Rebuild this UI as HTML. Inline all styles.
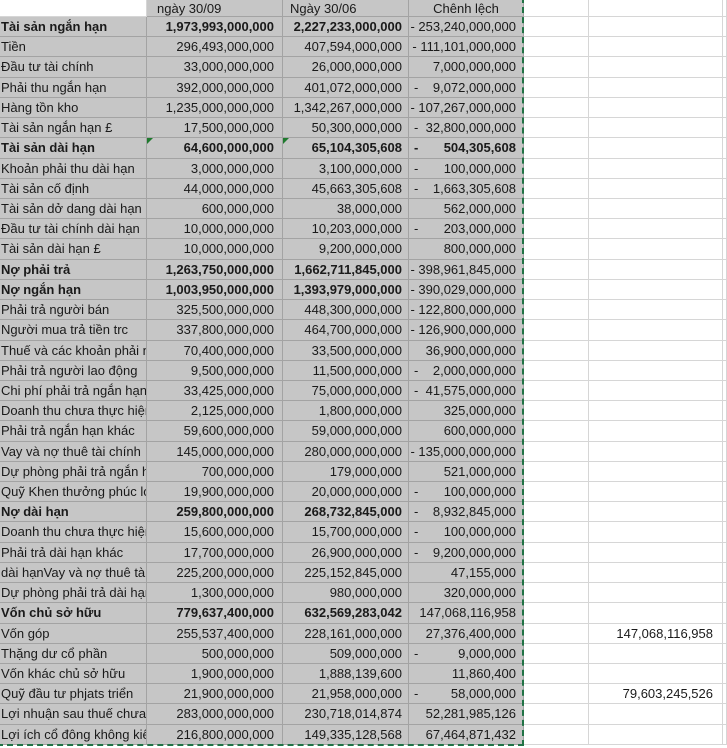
<!DOCTYPE html>
<html><head><meta charset="utf-8"><style>
*{margin:0;padding:0;box-sizing:border-box}
body{width:727px;height:748px;overflow:hidden;background:#fff;font-family:"Liberation Sans",Arial,sans-serif;font-size:13px;color:#1a1a1a;position:relative}
.r{display:flex;height:20.22px;line-height:20px}
.h{height:17px;line-height:17px}
.c{border-right:1px solid #a3a3a3;border-bottom:1px solid #a3a3a3;background:#c6c6c6;overflow:hidden;white-space:nowrap;position:relative}
.a{width:147px;padding-left:1px}
.b{width:136px;text-align:right;padding-right:8px}
.cc{width:126px;text-align:right;padding-right:6px}
.d{width:115px;text-align:right;padding-right:7px}
.d i{position:absolute;left:5px;font-style:normal}
.e{width:65px;background:#fff;border-color:#d6d6d6}
.f{width:134px;background:#fff;border-color:#d6d6d6;text-align:right;padding-right:9px}
.g{flex:1;background:#fff;border-right:1px solid #d6d6d6;border-bottom:1px solid #d6d6d6}
.bo .a,.bo .b,.bo .cc,.bo .d{font-weight:bold}
.w{background:#fff;border-color:#d6d6d6}
.tri{position:absolute;left:0;top:0;width:0;height:0;border-top:6px solid #1f7a2e;border-right:6px solid transparent}
#ants{position:absolute;left:-3px;top:-3px;width:527px;height:749px;border:2px dashed #217346;pointer-events:none}
</style></head><body>
<div class="r h"><div class="c a w"></div><div class="c b" style="text-align:left;padding-left:10px">ngày 30/09</div><div class="c cc" style="text-align:left;padding-left:7px">Ngày 30/06</div><div class="c d" style="text-align:center;padding:0">Chênh lệch</div><div class="c e"></div><div class="c f"></div><div class="g"></div></div>

<div class="r bo"><div class="c a">Tài sản ngắn hạn</div><div class="c b">1,973,993,000,000</div><div class="c cc">2,227,233,000,000</div><div class="c d" style="font-weight:normal">- 253,240,000,000</div><div class="c e"></div><div class="c f"></div><div class="g"></div></div>
<div class="r"><div class="c a">Tiền</div><div class="c b">296,493,000,000</div><div class="c cc">407,594,000,000</div><div class="c d">- 111,101,000,000</div><div class="c e"></div><div class="c f"></div><div class="g"></div></div>
<div class="r"><div class="c a">Đầu tư tài chính</div><div class="c b">33,000,000,000</div><div class="c cc">26,000,000,000</div><div class="c d">7,000,000,000</div><div class="c e"></div><div class="c f"></div><div class="g"></div></div>
<div class="r"><div class="c a">Phải thu ngắn hạn</div><div class="c b">392,000,000,000</div><div class="c cc">401,072,000,000</div><div class="c d"><i>-</i>9,072,000,000</div><div class="c e"></div><div class="c f"></div><div class="g"></div></div>
<div class="r"><div class="c a">Hàng tồn kho</div><div class="c b">1,235,000,000,000</div><div class="c cc">1,342,267,000,000</div><div class="c d">- 107,267,000,000</div><div class="c e"></div><div class="c f"></div><div class="g"></div></div>
<div class="r"><div class="c a">Tài sản ngắn hạn £</div><div class="c b">17,500,000,000</div><div class="c cc">50,300,000,000</div><div class="c d"><i>-</i>32,800,000,000</div><div class="c e"></div><div class="c f"></div><div class="g"></div></div>
<div class="r bo"><div class="c a">Tài sản dài hạn</div><div class="c b"><span class="tri"></span>64,600,000,000</div><div class="c cc"><span class="tri"></span>65,104,305,608</div><div class="c d"><i>-</i>504,305,608</div><div class="c e"></div><div class="c f"></div><div class="g"></div></div>
<div class="r"><div class="c a">Khoản phải thu dài hạn</div><div class="c b">3,000,000,000</div><div class="c cc">3,100,000,000</div><div class="c d"><i>-</i>100,000,000</div><div class="c e"></div><div class="c f"></div><div class="g"></div></div>
<div class="r"><div class="c a">Tài sản cố định</div><div class="c b">44,000,000,000</div><div class="c cc">45,663,305,608</div><div class="c d"><i>-</i>1,663,305,608</div><div class="c e"></div><div class="c f"></div><div class="g"></div></div>
<div class="r"><div class="c a">Tài sản dở dang dài hạn</div><div class="c b">600,000,000</div><div class="c cc">38,000,000</div><div class="c d">562,000,000</div><div class="c e"></div><div class="c f"></div><div class="g"></div></div>
<div class="r"><div class="c a">Đầu tư tài chính dài hạn</div><div class="c b">10,000,000,000</div><div class="c cc">10,203,000,000</div><div class="c d"><i>-</i>203,000,000</div><div class="c e"></div><div class="c f"></div><div class="g"></div></div>
<div class="r"><div class="c a">Tài sản dài hạn £</div><div class="c b">10,000,000,000</div><div class="c cc">9,200,000,000</div><div class="c d">800,000,000</div><div class="c e"></div><div class="c f"></div><div class="g"></div></div>
<div class="r bo"><div class="c a">Nợ phải trả</div><div class="c b">1,263,750,000,000</div><div class="c cc">1,662,711,845,000</div><div class="c d" style="font-weight:normal">- 398,961,845,000</div><div class="c e"></div><div class="c f"></div><div class="g"></div></div>
<div class="r bo"><div class="c a">Nợ ngắn hạn</div><div class="c b">1,003,950,000,000</div><div class="c cc">1,393,979,000,000</div><div class="c d" style="font-weight:normal">- 390,029,000,000</div><div class="c e"></div><div class="c f"></div><div class="g"></div></div>
<div class="r"><div class="c a">Phải trả người bán</div><div class="c b">325,500,000,000</div><div class="c cc">448,300,000,000</div><div class="c d">- 122,800,000,000</div><div class="c e"></div><div class="c f"></div><div class="g"></div></div>
<div class="r"><div class="c a">Người mua trả tiền trc</div><div class="c b">337,800,000,000</div><div class="c cc">464,700,000,000</div><div class="c d">- 126,900,000,000</div><div class="c e"></div><div class="c f"></div><div class="g"></div></div>
<div class="r"><div class="c a">Thuế và các khoản phải nộp</div><div class="c b">70,400,000,000</div><div class="c cc">33,500,000,000</div><div class="c d">36,900,000,000</div><div class="c e"></div><div class="c f"></div><div class="g"></div></div>
<div class="r"><div class="c a">Phải trả người lao động</div><div class="c b">9,500,000,000</div><div class="c cc">11,500,000,000</div><div class="c d"><i>-</i>2,000,000,000</div><div class="c e"></div><div class="c f"></div><div class="g"></div></div>
<div class="r"><div class="c a">Chi phí phải trả ngắn hạn</div><div class="c b">33,425,000,000</div><div class="c cc">75,000,000,000</div><div class="c d"><i>-</i>41,575,000,000</div><div class="c e"></div><div class="c f"></div><div class="g"></div></div>
<div class="r"><div class="c a">Doanh thu chưa thực hiện</div><div class="c b">2,125,000,000</div><div class="c cc">1,800,000,000</div><div class="c d">325,000,000</div><div class="c e"></div><div class="c f"></div><div class="g"></div></div>
<div class="r"><div class="c a">Phải trả ngắn hạn khác</div><div class="c b">59,600,000,000</div><div class="c cc">59,000,000,000</div><div class="c d">600,000,000</div><div class="c e"></div><div class="c f"></div><div class="g"></div></div>
<div class="r"><div class="c a">Vay và nợ thuê tài chính</div><div class="c b">145,000,000,000</div><div class="c cc">280,000,000,000</div><div class="c d">- 135,000,000,000</div><div class="c e"></div><div class="c f"></div><div class="g"></div></div>
<div class="r"><div class="c a">Dự phòng phải trả ngắn hạn</div><div class="c b">700,000,000</div><div class="c cc">179,000,000</div><div class="c d">521,000,000</div><div class="c e"></div><div class="c f"></div><div class="g"></div></div>
<div class="r"><div class="c a">Quỹ Khen thưởng phúc lợi</div><div class="c b">19,900,000,000</div><div class="c cc">20,000,000,000</div><div class="c d"><i>-</i>100,000,000</div><div class="c e"></div><div class="c f"></div><div class="g"></div></div>
<div class="r bo"><div class="c a">Nợ dài hạn</div><div class="c b">259,800,000,000</div><div class="c cc">268,732,845,000</div><div class="c d" style="font-weight:normal"><i>-</i>8,932,845,000</div><div class="c e"></div><div class="c f"></div><div class="g"></div></div>
<div class="r"><div class="c a">Doanh thu chưa thực hiện</div><div class="c b">15,600,000,000</div><div class="c cc">15,700,000,000</div><div class="c d"><i>-</i>100,000,000</div><div class="c e"></div><div class="c f"></div><div class="g"></div></div>
<div class="r"><div class="c a">Phải trả dài hạn khác</div><div class="c b">17,700,000,000</div><div class="c cc">26,900,000,000</div><div class="c d"><i>-</i>9,200,000,000</div><div class="c e"></div><div class="c f"></div><div class="g"></div></div>
<div class="r"><div class="c a">dài hạnVay và nợ thuê tài</div><div class="c b">225,200,000,000</div><div class="c cc">225,152,845,000</div><div class="c d">47,155,000</div><div class="c e"></div><div class="c f"></div><div class="g"></div></div>
<div class="r"><div class="c a">Dự phòng phải trả dài hạn</div><div class="c b">1,300,000,000</div><div class="c cc">980,000,000</div><div class="c d">320,000,000</div><div class="c e"></div><div class="c f"></div><div class="g"></div></div>
<div class="r bo"><div class="c a">Vốn chủ sở hữu</div><div class="c b">779,637,400,000</div><div class="c cc">632,569,283,042</div><div class="c d" style="font-weight:normal">147,068,116,958</div><div class="c e"></div><div class="c f"></div><div class="g"></div></div>
<div class="r"><div class="c a">Vốn góp</div><div class="c b">255,537,400,000</div><div class="c cc">228,161,000,000</div><div class="c d">27,376,400,000</div><div class="c e"></div><div class="c f">147,068,116,958</div><div class="g"></div></div>
<div class="r"><div class="c a">Thặng dư cổ phần</div><div class="c b">500,000,000</div><div class="c cc">509,000,000</div><div class="c d"><i>-</i>9,000,000</div><div class="c e"></div><div class="c f"></div><div class="g"></div></div>
<div class="r"><div class="c a">Vốn khác chủ sở hữu</div><div class="c b">1,900,000,000</div><div class="c cc">1,888,139,600</div><div class="c d">11,860,400</div><div class="c e"></div><div class="c f"></div><div class="g"></div></div>
<div class="r"><div class="c a">Quỹ đầu tư phjats triển</div><div class="c b">21,900,000,000</div><div class="c cc">21,958,000,000</div><div class="c d"><i>-</i>58,000,000</div><div class="c e"></div><div class="c f">79,603,245,526</div><div class="g"></div></div>
<div class="r"><div class="c a">Lợi nhuận sau thuế chưa phân phối</div><div class="c b">283,000,000,000</div><div class="c cc">230,718,014,874</div><div class="c d">52,281,985,126</div><div class="c e"></div><div class="c f"></div><div class="g"></div></div>
<div class="r"><div class="c a">Lợi ích cổ đông không kiểm soát</div><div class="c b">216,800,000,000</div><div class="c cc">149,335,128,568</div><div class="c d">67,464,871,432</div><div class="c e"></div><div class="c f"></div><div class="g"></div></div>
<div id="ants"></div>
</body></html>
